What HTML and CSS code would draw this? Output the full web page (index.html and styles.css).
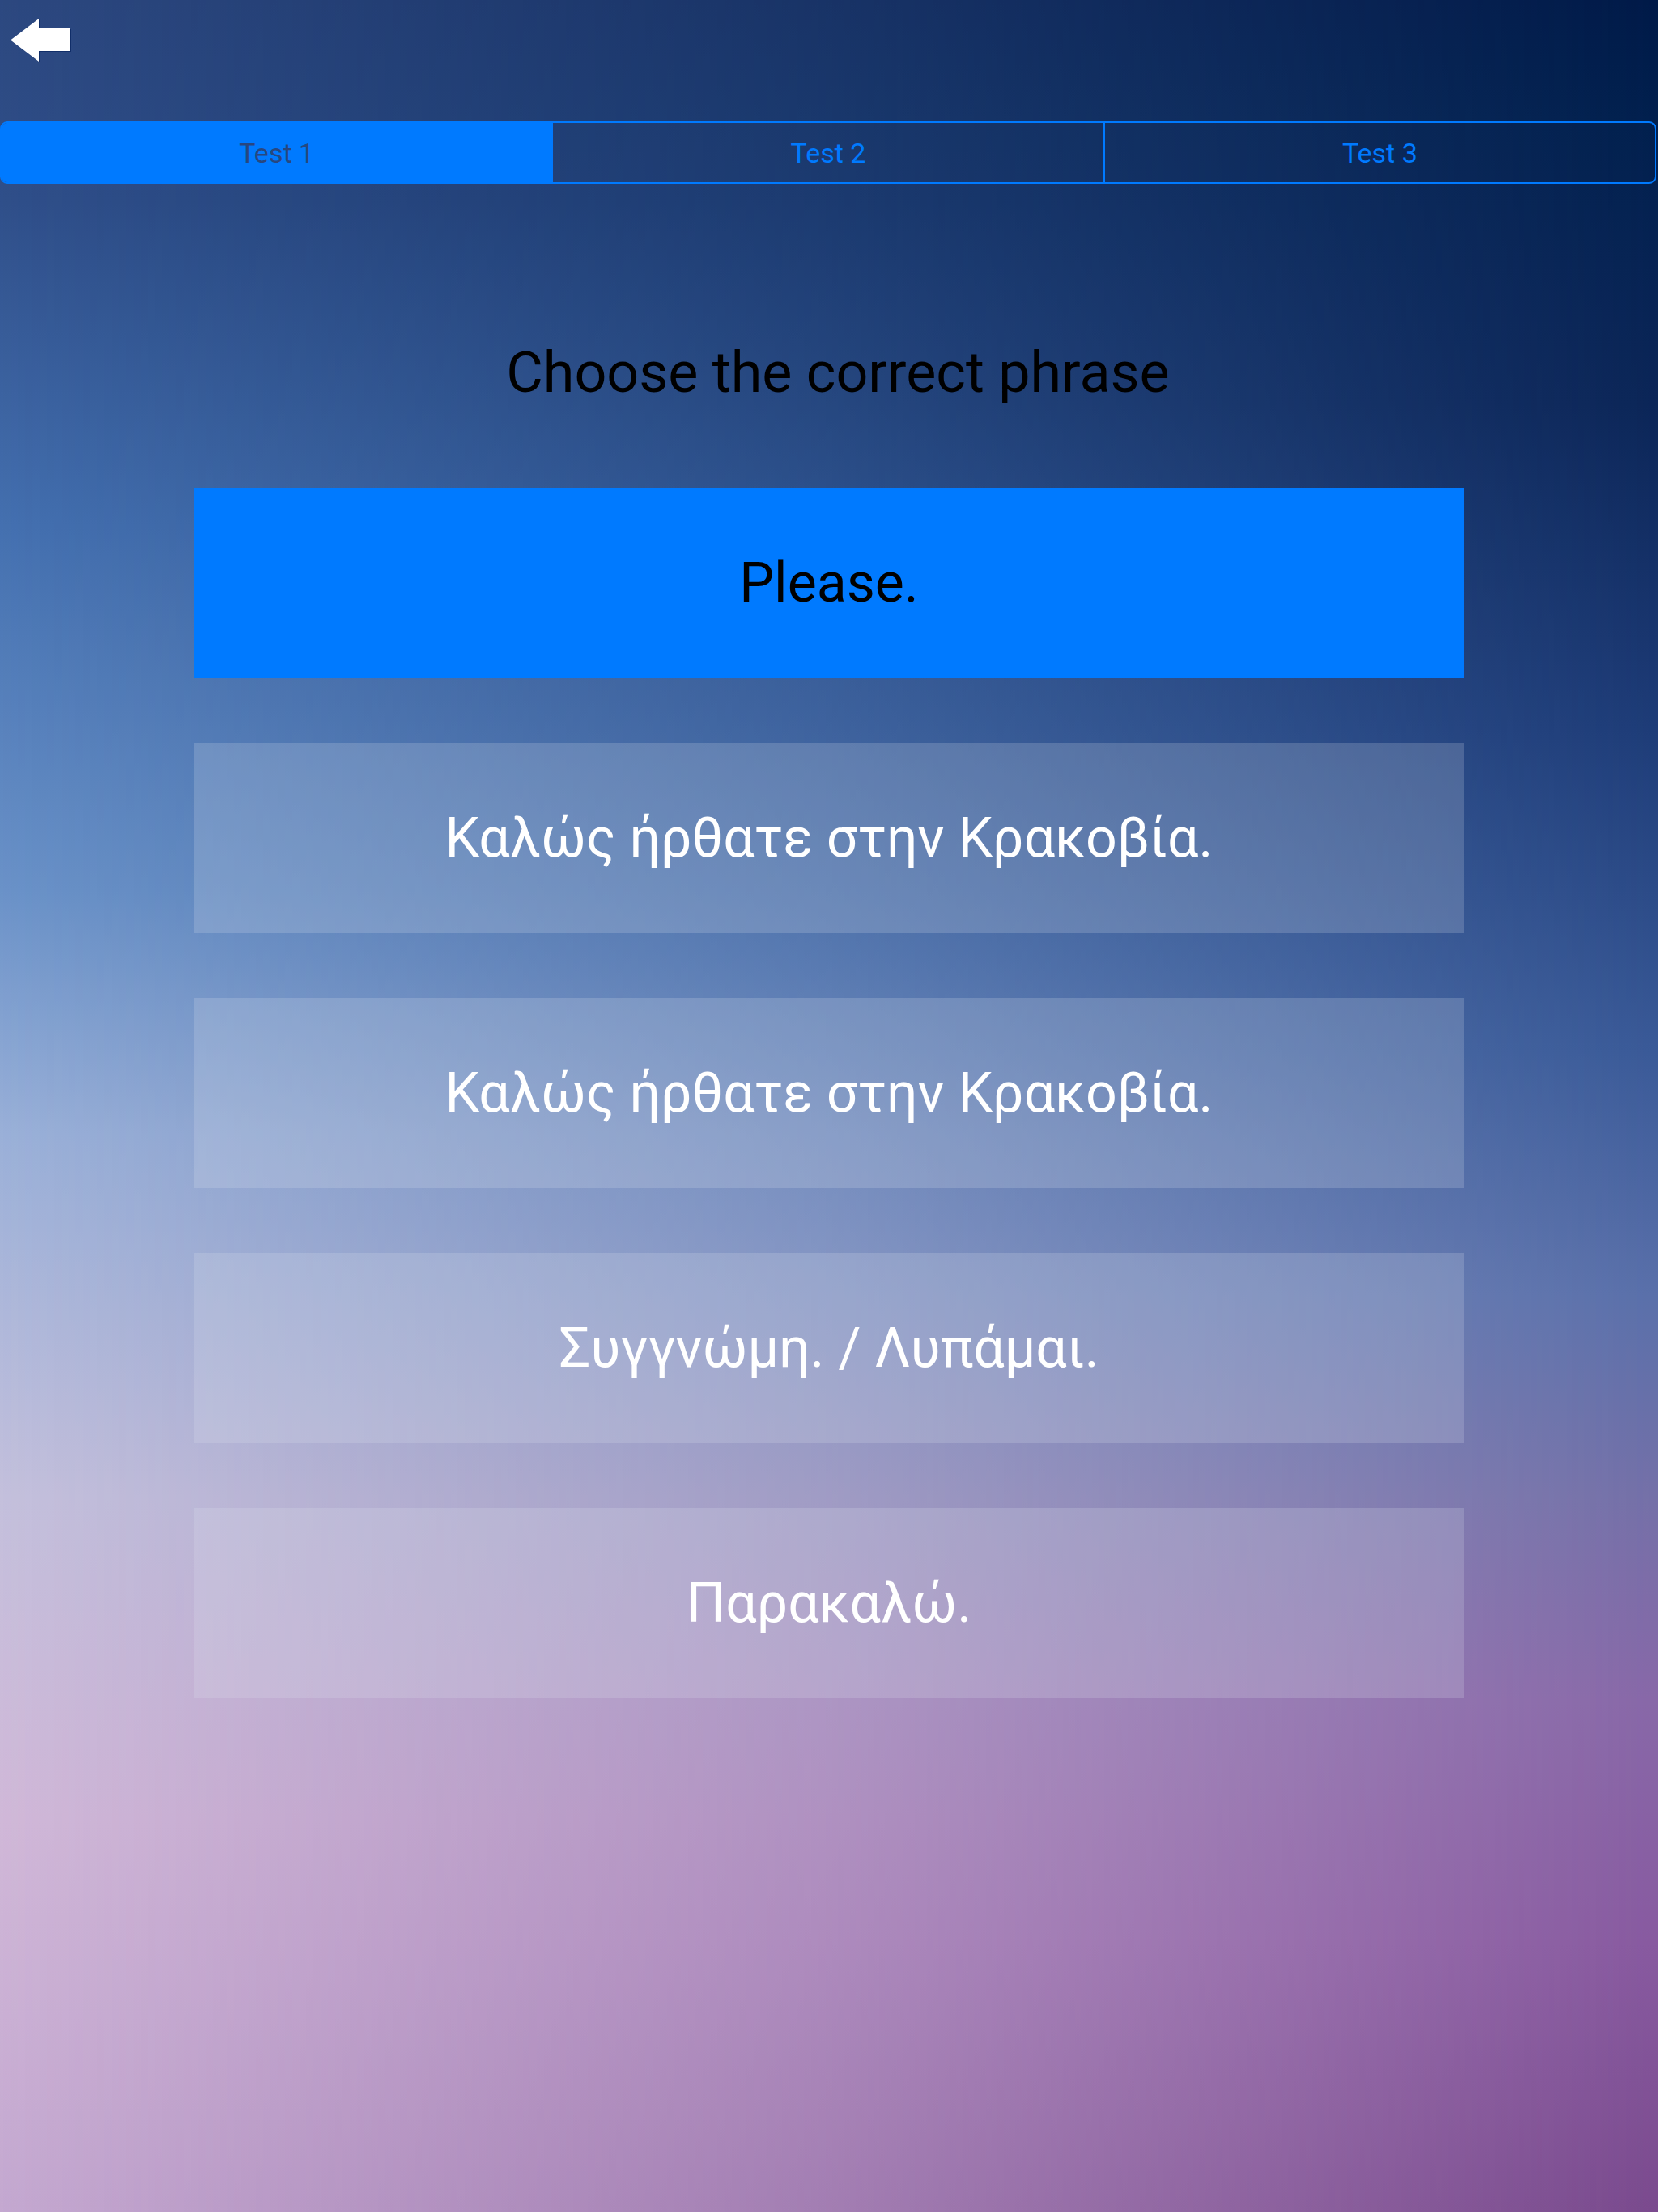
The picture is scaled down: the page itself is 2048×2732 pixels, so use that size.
FILE: index.html
```html
<!DOCTYPE html>
<html lang="en">
<head>
<meta charset="utf-8">
<title>Choose the correct phrase</title>
<link rel="stylesheet" href="styles.css">
</head>
<body>
<div class="screen">
  <header class="topbar">
    <button class="back" aria-label="Back">
      <svg class="back-icon" viewBox="0 0 76 56" width="76" height="56" aria-hidden="true">
        <path d="M1 27.5 L36 1 L36 13 L75 13 L75 41 L36 41 L36 54 Z" fill="#ffffff"/>
      </svg>
    </button>
  </header>

  <nav class="segmented">
    <div class="seg active">Test 1</div>
    <div class="seg">Test 2</div>
    <div class="seg">Test 3</div>
  </nav>

  <main class="quiz">
    <h1 class="prompt">Choose the correct phrase</h1>
    <ul class="options">
      <li class="option selected">Please.</li>
      <li class="option">Καλώς ήρθατε στην Κρακοβία.</li>
      <li class="option">Καλώς ήρθατε στην Κρακοβία.</li>
      <li class="option">Συγγνώμη. / Λυπάμαι.</li>
      <li class="option">Παρακαλώ.</li>
    </ul>
  </main>
</div>
</body>
</html>
```

FILE: styles.css
```css
html, body {
  margin: 0;
  padding: 0;
}

body {
  width: 2048px;
  font-family: Roboto, "Noto Sans", "DejaVu Sans", sans-serif;
}

.screen {
  position: relative;
  width: 2048px;
  min-height: 2732px;
  overflow: hidden;
  background: linear-gradient(to bottom,
    #001a48 0px,
    #02204e 150px,
    #0c2658 500px,
    #1e3c78 900px,
    #3a5a98 1300px,
    #5a70aa 1600px,
    #7470a8 1850px,
    #8868a8 2100px,
    #885aa0 2400px,
    #7a4a8e 2732px);
}

/* left-side colour field, faded horizontally over the right-side field */
.screen::before {
  content: "";
  position: absolute;
  inset: 0;
  background: linear-gradient(to bottom,
    #2c4880 0px,
    #2f4f8a 250px,
    #4470b0 650px,
    #6a92c8 1100px,
    #9ab0d8 1400px,
    #c4c0dc 1850px,
    #d0b8d8 2250px,
    #c4a8d0 2732px);
  -webkit-mask-image: linear-gradient(to right, #000 0%, rgba(0,0,0,0.55) 50%, rgba(0,0,0,0) 100%);
  mask-image: linear-gradient(to right, #000 0%, rgba(0,0,0,0.55) 50%, rgba(0,0,0,0) 100%);
  z-index: 0;
}

.topbar,
.segmented,
.quiz {
  position: relative;
  z-index: 1;
}

.topbar {
  height: 150px;
  box-sizing: border-box;
  padding: 22px 0 0 12px;
}

.back {
  display: block;
  padding: 0;
  margin: 0;
  border: 0;
  background: none;
  cursor: pointer;
}

.back-icon {
  display: block;
  filter: drop-shadow(1px 1px 0 rgba(0, 30, 90, 0.6));
}

.segmented {
  display: flex;
  width: 2046px;
  height: 77px;
  box-sizing: border-box;
  border: 2px solid #007aff;
  border-radius: 9px;
  overflow: hidden;
}

.seg {
  flex: 1 1 0;
  display: flex;
  align-items: center;
  justify-content: center;
  font-size: 34px;
  color: #007aff;
  border-left: 2px solid #007aff;
}

.seg:first-child {
  border-left: 0;
}

.seg.active {
  background: #007aff;
  color: #28477f;
}

.quiz {
  display: flex;
  flex-direction: column;
  align-items: center;
}

.prompt {
  margin: 190px 0 0 0;
  padding-left: 22px;
  font-size: 70px;
  line-height: 86px;
  font-weight: 400;
  color: #000000;
  text-align: center;
}

.options {
  list-style: none;
  margin: 100px 0 0 0;
  padding: 0;
  width: 1568px;
  display: flex;
  flex-direction: column;
  gap: 81px;
}

.option {
  height: 234px;
  display: flex;
  align-items: center;
  justify-content: center;
  font-size: 68px;
  color: #ffffff;
  background: rgba(225, 228, 240, 0.2);
}

.option.selected {
  background: #007aff;
  color: #000000;
}
```
